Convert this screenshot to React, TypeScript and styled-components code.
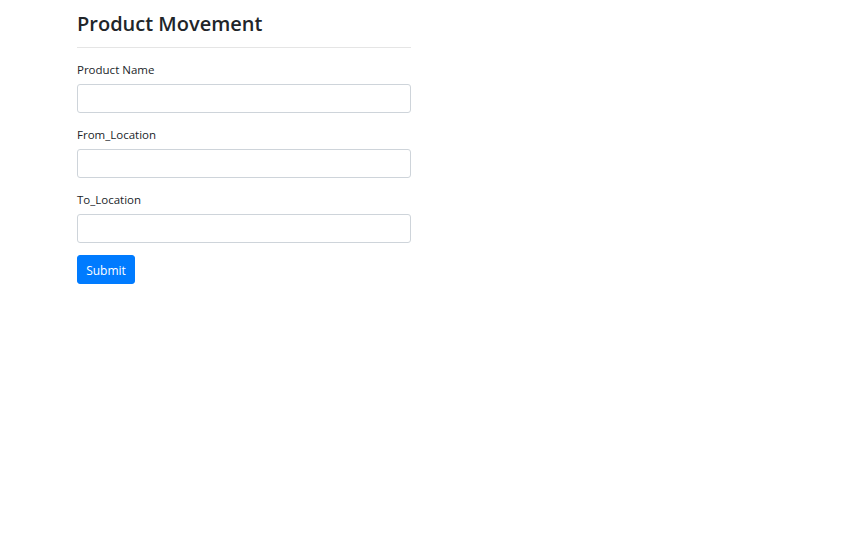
import React from "react";
import styled, { createGlobalStyle } from "styled-components";

const GlobalStyle = createGlobalStyle`
  html, body {
    margin: 0;
    padding: 0;
    background: #ffffff;
  }
  body {
    font-family: "Open Sans", "Noto Sans", "Liberation Sans", sans-serif;
    color: #212529;
  }
  * { box-sizing: border-box; }
`;

const Page = styled.div`
  padding: 0 0 0 77px;
`;

const Panel = styled.div`
  width: 334px;
  display: flex;
  flex-direction: column;
`;

const Heading = styled.h3`
  margin: 10px 0 0;
  font-size: 20px;
  line-height: 28px;
  font-weight: 600;
  color: #212529;
`;

const Rule = styled.hr`
  margin: 9px 0 12px;
  border: 0;
  border-top: 1px solid rgba(0, 0, 0, 0.1);
  height: 0;
`;

const Form = styled.form`
  display: flex;
  flex-direction: column;
`;

const Group = styled.div`
  display: flex;
  flex-direction: column;
  margin-bottom: 12px;
`;

const Label = styled.label`
  font-size: 11.5px;
  line-height: 18px;
  padding-top: 1px;
  margin-bottom: 5px;
  color: #212529;
`;

const Input = styled.input`
  height: 29px;
  width: 100%;
  padding: 4.5px 9px;
  font-size: 12px;
  font-family: inherit;
  color: #495057;
  background: #fff;
  border: 1px solid #ced4da;
  border-radius: 3px;
  outline: none;
`;

const Button = styled.button`
  align-self: flex-start;
  width: 58px;
  height: 29px;
  padding: 2px 0 0;
  font-family: inherit;
  font-size: 12px;
  line-height: 18px;
  color: #fff;
  background: #007bff;
  border: 1px solid #007bff;
  border-radius: 3px;
  cursor: pointer;
`;

const fields = ["Product Name", "From_Location", "To_Location"];

export default function App() {
  return (
    <>
      <GlobalStyle />
      <Page>
        <Panel>
          <Heading>Product Movement</Heading>
          <Rule />
          <Form onSubmit={(e) => e.preventDefault()}>
            {fields.map((f) => (
              <Group key={f}>
                <Label>{f}</Label>
                <Input type="text" />
              </Group>
            ))}
            <Button type="submit">Submit</Button>
          </Form>
        </Panel>
      </Page>
    </>
  );
}
